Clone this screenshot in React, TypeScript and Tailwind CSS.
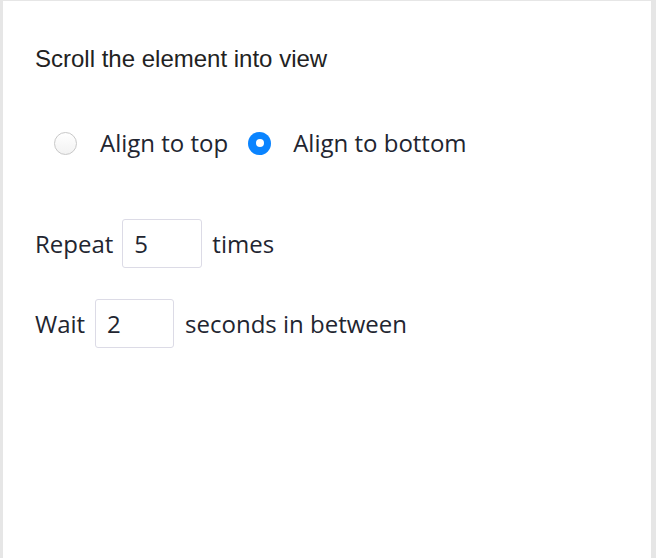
import React from "react";

export default function App() {
  return (
    <div className="w-[656px] h-[558px] bg-[#e6e6e6] flex pl-[3px] pt-[1px] pr-[5px] overflow-hidden">
      <div className="flex-1 bg-white flex flex-col pl-[32px] pt-[44px]">
        <h1 className="text-[24px] leading-[28px] text-[#222222] [font-family:'Liberation_Sans',Arial,sans-serif]">
          Scroll the element into view
        </h1>
        <div className="[font-family:'Open_Sans',sans-serif] text-[24px] text-[#222530]">
          <div className="flex items-center mt-[55px] ml-[19px] h-[30px]">
            <span className="w-[23px] h-[23px] rounded-full border border-[#c8c8c8] bg-gradient-to-b from-white to-[#f2f2f2]" />
            <span className="ml-[23px]">Align to top</span>
            <span className="ml-[20px] w-[23px] h-[23px] rounded-full bg-[#0a84ff] flex items-center justify-center">
              <span className="w-[8px] h-[8px] rounded-full bg-white" />
            </span>
            <span className="ml-[22px]">Align to bottom</span>
          </div>
          <div className="flex items-center mt-[61px]">
            <span>Repeat</span>
            <div className="ml-[9px] w-[80px] h-[49px] border border-[#dcdbe6] rounded-[3px] flex items-center pl-[11px]">5</div>
            <span className="ml-[10px]">times</span>
          </div>
          <div className="flex items-center mt-[31px]">
            <span>Wait</span>
            <div className="ml-[10px] w-[79px] h-[49px] border border-[#dcdbe6] rounded-[3px] flex items-center pl-[11px]">2</div>
            <span className="ml-[11px]">seconds in between</span>
          </div>
        </div>
      </div>
    </div>
  );
}
